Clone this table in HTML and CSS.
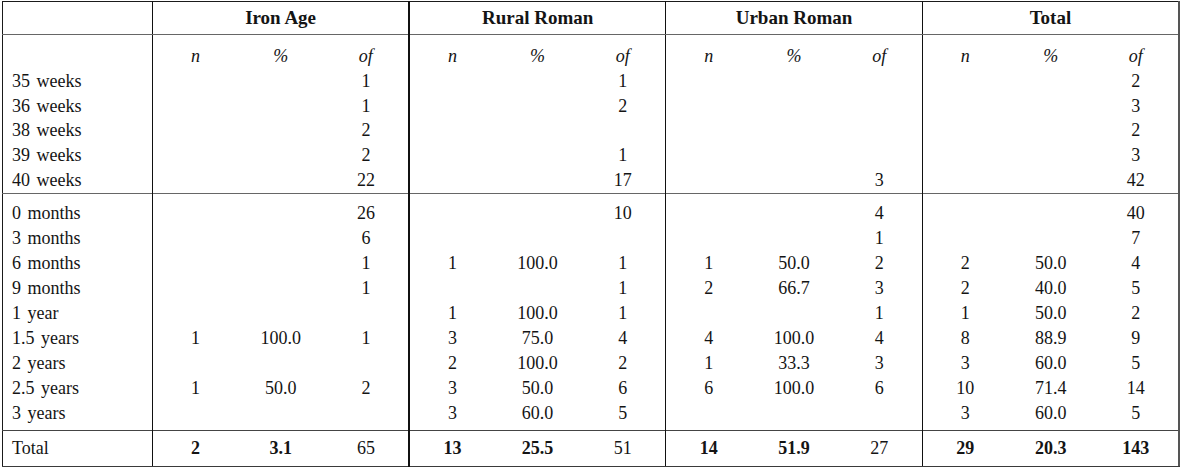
FILE: index.html
```html
<!DOCTYPE html>
<html lang="en">
<head>
<meta charset="utf-8">
<title>Table</title>
<link rel="stylesheet" href="styles.css">
</head>
<body>
<table class="tbl">
  <colgroup>
    <col class="c-label">
    <col class="c-num"><col class="c-num"><col class="c-num">
    <col class="c-num"><col class="c-num"><col class="c-num">
    <col class="c-num"><col class="c-num"><col class="c-num">
    <col class="c-num"><col class="c-num"><col class="c-num">
  </colgroup>
  <thead>
    <tr class="head">
      <th class="label"></th>
      <th colspan="3" class="grp">Iron Age</th>
      <th colspan="3" class="grp thick">Rural Roman</th>
      <th colspan="3" class="grp">Urban Roman</th>
      <th colspan="3" class="grp">Total</th>
    </tr>
  </thead>
  <tbody class="sec sec1">
    <tr class="sub first">
      <td class="label"></td>
      <td class="g"><i>n</i></td><td><i>%</i></td><td><i>of</i></td>
      <td class="g thick"><i>n</i></td><td><i>%</i></td><td><i>of</i></td>
      <td class="g"><i>n</i></td><td><i>%</i></td><td><i>of</i></td>
      <td class="g"><i>n</i></td><td><i>%</i></td><td><i>of</i></td>
    </tr>
    <tr><td class="label">35 weeks</td><td class="g"></td><td></td><td>1</td><td class="g thick"></td><td></td><td>1</td><td class="g"></td><td></td><td></td><td class="g"></td><td></td><td>2</td></tr>
    <tr><td class="label">36 weeks</td><td class="g"></td><td></td><td>1</td><td class="g thick"></td><td></td><td>2</td><td class="g"></td><td></td><td></td><td class="g"></td><td></td><td>3</td></tr>
    <tr><td class="label">38 weeks</td><td class="g"></td><td></td><td>2</td><td class="g thick"></td><td></td><td></td><td class="g"></td><td></td><td></td><td class="g"></td><td></td><td>2</td></tr>
    <tr><td class="label">39 weeks</td><td class="g"></td><td></td><td>2</td><td class="g thick"></td><td></td><td>1</td><td class="g"></td><td></td><td></td><td class="g"></td><td></td><td>3</td></tr>
    <tr class="last"><td class="label">40 weeks</td><td class="g"></td><td></td><td>22</td><td class="g thick"></td><td></td><td>17</td><td class="g"></td><td></td><td>3</td><td class="g"></td><td></td><td>42</td></tr>
  </tbody>
  <tbody class="sec sec2">
    <tr class="first"><td class="label">0 months</td><td class="g"></td><td></td><td>26</td><td class="g thick"></td><td></td><td>10</td><td class="g"></td><td></td><td>4</td><td class="g"></td><td></td><td>40</td></tr>
    <tr><td class="label">3 months</td><td class="g"></td><td></td><td>6</td><td class="g thick"></td><td></td><td></td><td class="g"></td><td></td><td>1</td><td class="g"></td><td></td><td>7</td></tr>
    <tr><td class="label">6 months</td><td class="g"></td><td></td><td>1</td><td class="g thick">1</td><td>100.0</td><td>1</td><td class="g">1</td><td>50.0</td><td>2</td><td class="g">2</td><td>50.0</td><td>4</td></tr>
    <tr><td class="label">9 months</td><td class="g"></td><td></td><td>1</td><td class="g thick"></td><td></td><td>1</td><td class="g">2</td><td>66.7</td><td>3</td><td class="g">2</td><td>40.0</td><td>5</td></tr>
    <tr><td class="label">1 year</td><td class="g"></td><td></td><td></td><td class="g thick">1</td><td>100.0</td><td>1</td><td class="g"></td><td></td><td>1</td><td class="g">1</td><td>50.0</td><td>2</td></tr>
    <tr><td class="label">1.5 years</td><td class="g">1</td><td>100.0</td><td>1</td><td class="g thick">3</td><td>75.0</td><td>4</td><td class="g">4</td><td>100.0</td><td>4</td><td class="g">8</td><td>88.9</td><td>9</td></tr>
    <tr><td class="label">2 years</td><td class="g"></td><td></td><td></td><td class="g thick">2</td><td>100.0</td><td>2</td><td class="g">1</td><td>33.3</td><td>3</td><td class="g">3</td><td>60.0</td><td>5</td></tr>
    <tr><td class="label">2.5 years</td><td class="g">1</td><td>50.0</td><td>2</td><td class="g thick">3</td><td>50.0</td><td>6</td><td class="g">6</td><td>100.0</td><td>6</td><td class="g">10</td><td>71.4</td><td>14</td></tr>
    <tr class="last"><td class="label">3 years</td><td class="g"></td><td></td><td></td><td class="g thick">3</td><td>60.0</td><td>5</td><td class="g"></td><td></td><td></td><td class="g">3</td><td>60.0</td><td>5</td></tr>
  </tbody>
  <tfoot>
    <tr class="total">
      <td class="label">Total</td>
      <td class="g"><b>2</b></td><td><b>3.1</b></td><td>65</td>
      <td class="g thick"><b>13</b></td><td><b>25.5</b></td><td>51</td>
      <td class="g"><b>14</b></td><td><b>51.9</b></td><td>27</td>
      <td class="g"><b>29</b></td><td><b>20.3</b></td><td><b>143</b></td>
    </tr>
  </tfoot>
</table>
</body>
</html>
```

FILE: styles.css
```css
html, body {
  margin: 0;
  padding: 0;
  background: #ffffff;
}

body {
  padding: 1px 0 0 2px;
  font-family: "Liberation Serif", "Times New Roman", serif;
  font-size: 18px;
  color: #141414;
}

.tbl {
  border-collapse: collapse;
  table-layout: fixed;
  width: 1178px;
  border-top: 1px solid #1a1a1a;
  border-left: 1px solid #1a1a1a;
  border-right: 2px solid #555555;
  border-bottom: 2px solid #3a3a3a;
}

.c-label {
  width: 150px;
}

.c-num {
  width: 85.5px;
}

.tbl th,
.tbl td {
  padding: 0;
  text-align: center;
  vertical-align: middle;
  height: 25px;
  line-height: 25px;
  white-space: nowrap;
}

.sec1 td {
  height: 24.75px;
  line-height: 24.75px;
}

.tbl .label {
  text-align: left;
  padding-left: 9px;
  border-right: 1px solid #111111;
  word-spacing: 2px;
}

.head th {
  height: 32px;
  line-height: 32px;
  font-size: 19px;
  font-weight: bold;
  border-bottom: 1px solid #666666;
}

.head .grp {
  border-left: 1px solid #111111;
}

.tbl .thick {
  border-left: 2px solid #111111;
}

.tbl td.g {
  border-left: 1px solid #111111;
}

.tbl td.g.thick {
  border-left: 2px solid #111111;
}

.sec1 .first td {
  padding-top: 9px;
}

.sec1 {
  border-bottom: 1px solid #666666;
}

.sec2 .first td {
  padding-top: 7px;
}

.sec2 .last td {
  padding-bottom: 4px;
}

.sec2 {
  border-bottom: 1px solid #444444;
}

.total td {
  height: 35px;
  line-height: 35px;
}

.tbl i {
  font-style: italic;
}

.tbl b {
  font-weight: bold;
}
```
